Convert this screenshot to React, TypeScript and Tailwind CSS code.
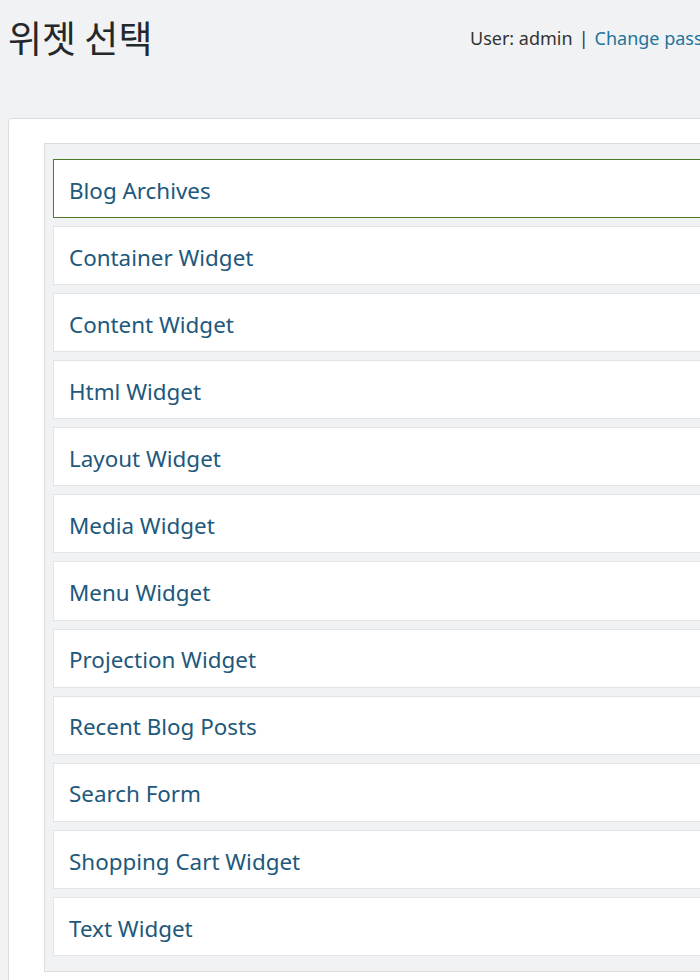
import React from 'react';

const widgets = [
  'Blog Archives',
  'Container Widget',
  'Content Widget',
  'Html Widget',
  'Layout Widget',
  'Media Widget',
  'Menu Widget',
  'Projection Widget',
  'Recent Blog Posts',
  'Search Form',
  'Shopping Cart Widget',
  'Text Widget',
];

const App: React.FC = () => {
  return (
    <div
      className="w-[700px] h-[980px] overflow-hidden bg-[#f1f2f4] text-[#333]"
      style={{ fontFamily: '"Noto Sans", "Noto Sans CJK KR", sans-serif' }}
    >
      <div className="w-[1000px]">
        {/* Header */}
        <div className="grid grid-cols-[470px_1fr] items-start h-[118px]">
          <h1
            className="pl-2 pt-[12px] text-[37px] leading-[50px] text-[#23282d] font-normal"
            style={{ fontFamily: '"Noto Sans CJK KR", sans-serif' }}
          >
            위젯 선택
          </h1>
          <div className="pt-[25px] text-[18px] leading-[26px] whitespace-nowrap">
            <span>User: admin</span>
            <span className="px-[6px]">|</span>
            <a className="text-[#21759b]">Change password</a>
            <span className="px-[6px]">|</span>
            <a className="text-[#21759b]">Logout</a>
          </div>
        </div>

        {/* Panel */}
        <div className="ml-2 bg-white border border-[#dcdcde] rounded-tl-[4px] pt-6 pl-[35px] pb-10">
          <div className="bg-[#f1f2f4] border border-[#dcdcde] pt-[15px] px-2 pb-[15px] flex flex-col gap-2">
            {widgets.map((w, i) => (
              <div
                key={w}
                className={
                  i === 0
                    ? 'h-[59px] bg-white border border-[#4f7a28] flex items-center pl-[15px] text-[#21587b]'
                    : 'h-[59.1px] bg-white border border-[#e2e4e7] flex items-center pl-[15px] text-[#21587b]'
                }
              >
                <span className="pt-1 text-[22.4px]">{w}</span>
              </div>
            ))}
          </div>
        </div>
      </div>
    </div>
  );
};

export default App;
